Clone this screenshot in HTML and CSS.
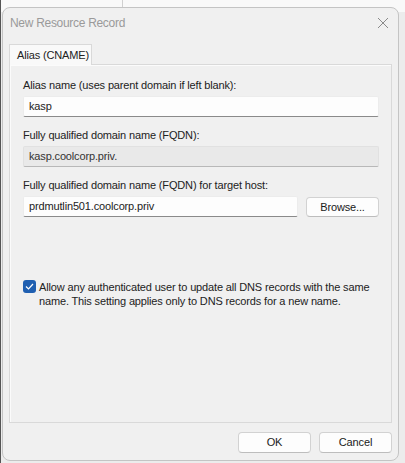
FILE: index.html
```html
<!DOCTYPE html>
<html>
<head>
<meta charset="utf-8">
<link rel="stylesheet" href="styles.css">
</head>
<body>
<div class="backdrop">
  <div class="bg-top"><div class="bg-divider"></div></div>
  <div class="dialog">
    <div class="titlebar">
      <span class="title">New Resource Record</span>
      <svg class="close" width="12" height="12" viewBox="0 0 12 12"><path d="M1 1 L11 11 M11 1 L1 11" stroke="#8a8a8a" stroke-width="1" fill="none"/></svg>
    </div>
    <div class="tabs">
      <div class="tab">Alias (CNAME)</div>
    </div>
    <div class="panel">
      <label class="lbl">Alias name (uses parent domain if left blank):</label>
      <div class="field">kasp</div>
      <label class="lbl">Fully qualified domain name (FQDN):</label>
      <div class="field readonly">kasp.coolcorp.priv.</div>
      <label class="lbl">Fully qualified domain name (FQDN) for target host:</label>
      <div class="row">
        <div class="field grow">prdmutlin501.coolcorp.priv</div>
        <div class="btn browse">Browse...</div>
      </div>
      <div class="check">
        <span class="box"><svg width="9" height="7" viewBox="0 0 9 7"><path d="M1 3.5 L3.5 6 L8 1" stroke="#fff" stroke-width="1.2" fill="none"/></svg></span>
        <span class="check-text">Allow any authenticated user to update all DNS records with the same name. This setting applies only to DNS records for a new name.</span>
      </div>
    </div>
    <div class="footer">
      <div class="btn">OK</div>
      <div class="btn">Cancel</div>
    </div>
  </div>
</div>
</body>
</html>
```
FILE: styles.css
```css
html, body {
  margin: 0;
  padding: 0;
  width: 405px;
  height: 463px;
  overflow: hidden;
  background: #e6e6e6;
  font-family: "Liberation Sans", Arial, sans-serif;
  font-size: 11px;
  letter-spacing: -0.15px;
  color: #222;
}
.backdrop {
  position: relative;
  width: 405px;
  height: 463px;
  background: #ececec;
  border-left: 1px solid #555;
  box-sizing: border-box;
}
.bg-top {
  position: absolute;
  left: 0;
  top: 0;
  width: 405px;
  height: 12px;
  background: #f9f9f9;
}
.bg-divider {
  position: absolute;
  left: 121px;
  top: 0;
  width: 1px;
  height: 7px;
  background: #d0d0d0;
}
.dialog {
  position: absolute;
  left: 1px;
  top: 7px;
  width: 397px;
  height: 454px;
  box-sizing: border-box;
  background: #f0f0f0;
  border: 1px solid #c4c4c4;
  border-radius: 8px;
  display: flex;
  flex-direction: column;
}
.titlebar {
  height: 30px;
  display: flex;
  align-items: center;
  justify-content: space-between;
  padding: 0 9px 0 7px;
}
.title {
  color: #9a9a9a;
  font-size: 12px;
  letter-spacing: -0.3px;
}
.tabs {
  display: flex;
  padding-left: 6px;
  height: 26px;
  align-items: flex-end;
}
.tab {
  height: 21px;
  box-sizing: border-box;
  padding: 4px 7px 0 7px;
  border: 1px solid #d9d9d9;
  border-bottom: none;
  background: #f9f9f9;
  margin-bottom: -1px;
  position: relative;
  z-index: 1;
  white-space: nowrap;
  width: 83px;
}
.panel {
  margin: 0 6px;
  height: 359px;
  box-sizing: border-box;
  border: 1px solid #d9d9d9;
  box-shadow: inset 1px 1px 0 #fbfbfb;
  padding: 13px 12px 0 13px;
  display: flex;
  flex-direction: column;
}
.lbl {
  display: block;
  height: 14px;
  line-height: 14px;
  margin-bottom: 4px;
}
.field {
  height: 21px;
  box-sizing: border-box;
  background: #fdfdfd;
  border: 1px solid #ececec;
  border-bottom: 1px solid #8a8a8a;
  border-radius: 2px;
  padding: 0 5px;
  line-height: 19px;
  margin-bottom: 11px;
}
.field.readonly {
  background: #e9e9e9;
  border-color: #e1e1e1;
  border-bottom-color: #b8b8b8;
  color: #333;
}
.row {
  display: flex;
  gap: 8px;
}
.grow {
  flex: 1;
}
.btn {
  height: 21px;
  box-sizing: border-box;
  width: 73px;
  border: 1px solid #d2d2d2;
  border-bottom-color: #bdbdbd;
  border-radius: 4px;
  background: #fdfdfd;
  text-align: center;
  line-height: 19px;
  color: #1a1a1a;
}
.browse {
  margin-top: 1px;
  height: 20px;
  line-height: 18px;
}
.check {
  margin-top: 52px;
  display: flex;
  align-items: flex-start;
  gap: 3px;
}
.box {
  flex: none;
  width: 13px;
  height: 13px;
  border-radius: 3px;
  background: #1f5fb1;
  display: flex;
  align-items: center;
  justify-content: center;
  margin-top: 0;
}
.check-text {
  line-height: 14px;
  width: 335px;
}
.footer {
  display: flex;
  justify-content: flex-end;
  gap: 8px;
  padding: 9px 6px 0 0;
}
```
